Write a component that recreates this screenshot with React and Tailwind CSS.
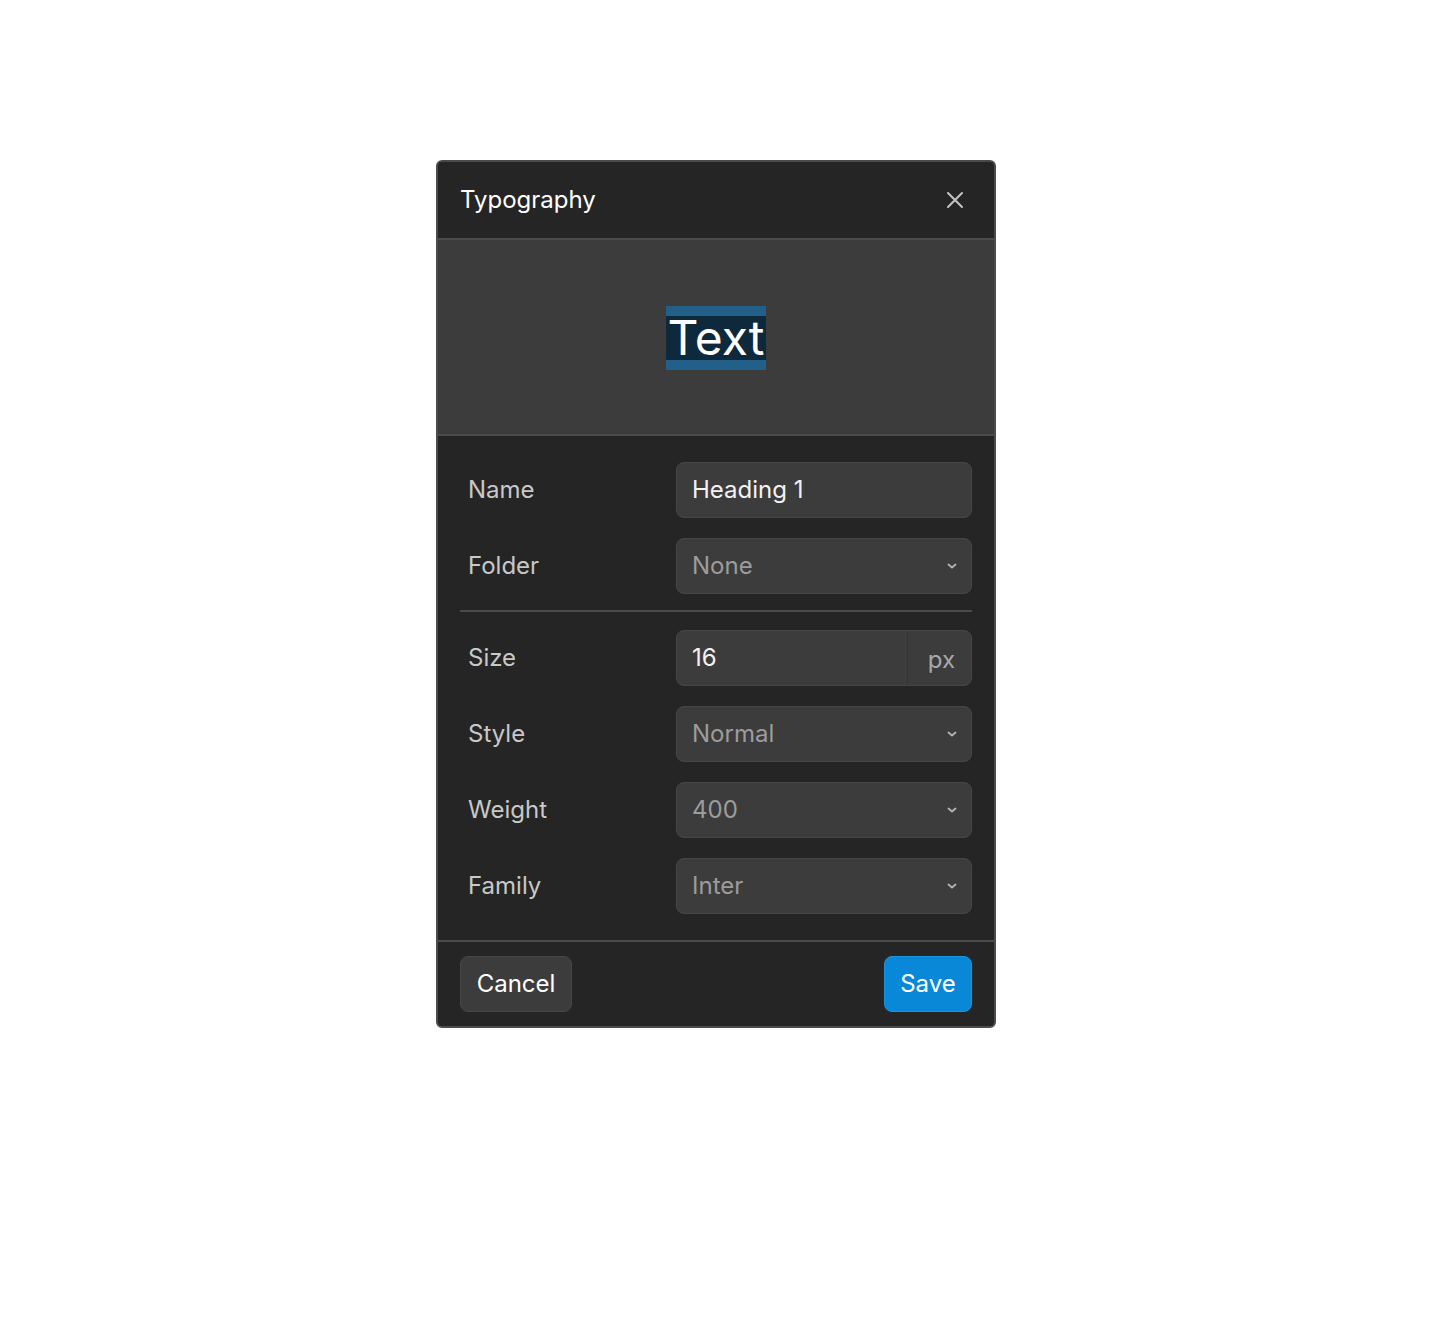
import React from 'react';

const Chevron = () => (
    <svg width="10" height="6" viewBox="0 0 10 6" fill="none" className="text-[#b4b4b4]">
        <path d="M1.5 1.5 L5 4.5 L8.5 1.5" stroke="currentColor" strokeWidth="1.8" strokeLinecap="round" strokeLinejoin="round" />
    </svg>
);

const Field = ({ label, children }) => (
    <div className="flex items-center h-[56px]">
        <div className="w-[216px] pl-[8px] text-[24px] text-[#c8c8c8]">{label}</div>
        <div className="flex-1">{children}</div>
    </div>
);

const Select = ({ value }) => (
    <div className="h-[56px] flex items-center justify-between pl-[15px] pr-[14px] bg-[#3c3c3c] border border-[#464646] rounded-[8px]">
        <span className="text-[24px] text-[#9c9c9c]">{value}</span>
        <Chevron />
    </div>
);

const App = () => {
    return (
        <div className="min-h-screen bg-white flex justify-center pt-[160px]" style={{ fontFamily: 'Inter, "Noto Sans", sans-serif' }}>
            <div className="w-[560px] h-[868px] flex flex-col bg-[#252525] border-2 border-[#4b4b4b] rounded-[6px] overflow-hidden">
                {/* header */}
                <div className="h-[78px] shrink-0 flex items-center justify-between pl-[22px] pr-[30px] border-b-2 border-[#4b4b4b]">
                    <h2 className="text-[24px] text-white">Typography</h2>
                    <svg width="18" height="18" viewBox="0 0 18 18" fill="none" className="text-[#c4c4c4]">
                        <path d="M2 2 L16 16 M16 2 L2 16" stroke="currentColor" strokeWidth="2" strokeLinecap="round" />
                    </svg>
                </div>

                {/* preview */}
                <div className="h-[196px] shrink-0 flex items-center justify-center pt-[2px] bg-[#3c3c3c] border-b-2 border-[#4b4b4b]">
                    <div className="bg-[#226089] py-[10px]">
                        <div className="bg-[#0f293c] h-[44px] px-[2px] flex items-center text-[48px] leading-none text-white">Text</div>
                    </div>
                </div>

                {/* fields */}
                <div className="flex-1 flex flex-col px-[22px] pt-[26px]">
                    <div className="flex flex-col gap-[20px]">
                        <Field label="Name">
                            <div className="h-[56px] flex items-center pl-[15px] bg-[#3c3c3c] border border-[#464646] rounded-[8px] text-[24px] text-[#f2f2f2]">Heading 1</div>
                        </Field>
                        <Field label="Folder">
                            <Select value="None" />
                        </Field>
                    </div>
                    <div className="h-[2px] bg-[#4b4b4b] mt-[16px] mb-[18px]" />
                    <div className="flex flex-col gap-[20px]">
                        <Field label="Size">
                            <div className="h-[56px] flex bg-[#3c3c3c] border border-[#464646] rounded-[8px]">
                                <div className="flex-1 flex items-center pl-[15px] text-[24px] text-[#f2f2f2]">16</div>
                                <div className="w-[64px] flex items-center justify-center pt-[4px] pl-[4px] border-l border-[#343434] text-[24px] text-[#a8a8a8]">px</div>
                            </div>
                        </Field>
                        <Field label="Style">
                            <Select value="Normal" />
                        </Field>
                        <Field label="Weight">
                            <Select value="400" />
                        </Field>
                        <Field label="Family">
                            <Select value="Inter" />
                        </Field>
                    </div>
                </div>

                {/* footer */}
                <div className="h-[86px] shrink-0 flex items-center justify-between px-[22px] border-t-2 border-[#4b4b4b]">
                    <button className="h-[56px] w-[112px] rounded-[8px] bg-[#3c3c3c] border border-[#464646] text-[24px] text-white">Cancel</button>
                    <button className="h-[56px] w-[88px] rounded-[8px] bg-[#0a88d8] border border-[#1893e2] text-[24px] text-white">Save</button>
                </div>
            </div>
        </div>
    );
};

export default App;
